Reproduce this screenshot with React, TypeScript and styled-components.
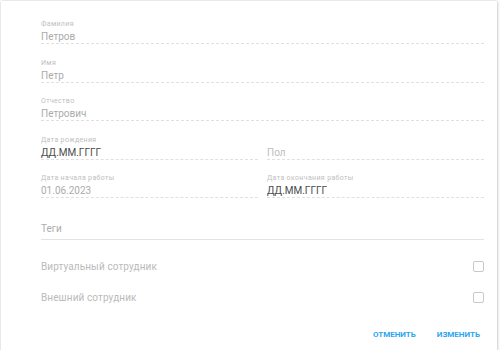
import styled, { createGlobalStyle } from "styled-components";

const GlobalStyle = createGlobalStyle`
  html, body {
    margin: 0;
    padding: 0;
    background: #ffffff;
    overflow: hidden;
  }
  body {
    font-family: Roboto, "Noto Sans", sans-serif;
  }
`;

function Field({
  label,
  value,
  tone = "muted",
}: {
  label?: string;
  value: string;
  tone?: "muted" | "dark" | "placeholder";
}) {
  return (
    <StyledField>
      <FieldLabel>{label ?? "\u00a0"}</FieldLabel>
      <FieldValue $tone={tone}>{value}</FieldValue>
    </StyledField>
  );
}

function CheckRow({ text }: { text: string }) {
  return (
    <StyledCheckRow>
      <span>{text}</span>
      <CheckBox />
    </StyledCheckRow>
  );
}

function App() {
  return (
    <>
      <GlobalStyle />
      <Dialog>
        <Form>
          <Field label="Фамилия" value="Петров" />
          <Field label="Имя" value="Петр" />
          <Field label="Отчество" value="Петрович" />
          <TwoColumns>
            <Field label="Дата рождения" value="ДД.ММ.ГГГГ" tone="dark" />
            <Field value="Пол" tone="placeholder" />
          </TwoColumns>
          <TwoColumns>
            <Field label="Дата начала работы" value="01.06.2023" />
            <Field label="Дата окончания работы" value="ДД.ММ.ГГГГ" tone="dark" />
          </TwoColumns>
          <TagsInput>Теги</TagsInput>
          <Checks>
            <CheckRow text="Виртуальный сотрудник" />
            <CheckRow text="Внешний сотрудник" />
          </Checks>
        </Form>
        <Actions>
          <TextButton>Отменить</TextButton>
          <TextButton>Изменить</TextButton>
        </Actions>
      </Dialog>
    </>
  );
}

export default App;

const Dialog = styled.div`
  margin: 1px 3px 0 1px;
  height: 360px;
  background: #fff;
  box-shadow: 0 0 2px rgba(0, 0, 0, 0.22), 1px 1px 3px rgba(0, 0, 0, 0.12);
  box-sizing: border-box;
  padding: 19px 13px 0 40px;
`;

const Form = styled.div`
  display: flex;
  flex-direction: column;
`;

const StyledField = styled.div`
  display: flex;
  flex-direction: column;
  height: 38.5px;
  box-sizing: border-box;

  &::after {
    content: "";
    display: block;
    border-bottom: 1px dashed #e0e0e0;
  }
`;

const FieldLabel = styled.div`
  font-size: 7px;
  line-height: 9px;
  letter-spacing: 0.35px;
  color: #c0c0c0;
`;

const FieldValue = styled.div<{ $tone: "muted" | "dark" | "placeholder" }>`
  margin-top: 2px;
  font-size: 10px;
  line-height: 12px;
  color: ${({ $tone }) =>
    $tone === "dark" ? "#4a4a4a" : $tone === "placeholder" ? "#bdbdbd" : "#ababab"};
`;

const TwoColumns = styled.div`
  display: grid;
  grid-template-columns: 1fr 1fr;
  column-gap: 9px;
`;

const TagsInput = styled.div`
  margin-top: 10px;
  padding-bottom: 4px;
  font-size: 10px;
  line-height: 12px;
  color: #adadad;
  border-bottom: 1px solid #e3e3e3;
`;

const Checks = styled.div`
  display: flex;
  flex-direction: column;
  margin-top: 11px;
`;

const StyledCheckRow = styled.div`
  display: flex;
  align-items: center;
  justify-content: space-between;
  height: 31px;
  font-size: 10px;
  color: #bababa;
  letter-spacing: 0.1px;
`;

const CheckBox = styled.span`
  width: 9px;
  height: 9px;
  border: 1px solid #c8c8c8;
  border-radius: 2px;
`;

const Actions = styled.div`
  display: flex;
  justify-content: flex-end;
  gap: 5px;
  margin-top: 13px;
  margin-right: -4px;
`;

const TextButton = styled.button`
  border: none;
  background: none;
  padding: 4px 8px;
  font-family: Roboto, "Noto Sans", sans-serif;
  font-size: 8px;
  font-weight: 700;
  text-transform: uppercase;
  color: #2aa5f0;
  cursor: pointer;
`;
